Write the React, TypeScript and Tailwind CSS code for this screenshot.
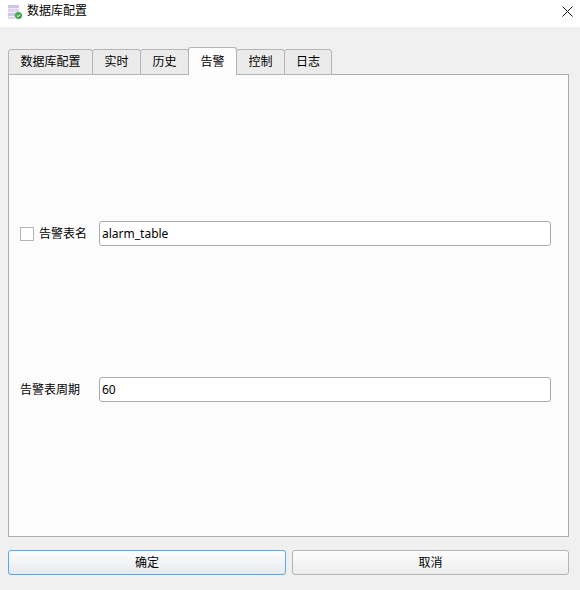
const font = "font-['Noto_Sans','Noto_Sans_CJK_SC',sans-serif]";

const tabs = [
  { label: "数据库配置", width: "w-[85px]" },
  { label: "实时", width: "w-[49px]" },
  { label: "历史", width: "w-[49px]" },
  { label: "告警", width: "w-[49px]", active: true },
  { label: "控制", width: "w-[49px]" },
  { label: "日志", width: "w-[48px]" },
];

function DbIcon() {
  return (
    <svg width="15" height="15" viewBox="0 0 15 15" className="shrink-0 mt-[-3px]">
      <rect x="0" y="0" width="11" height="3.4" fill="#cfc6e6" />
      <rect x="0" y="4" width="11" height="3.4" fill="#dcd5ee" />
      <rect x="0" y="8" width="11" height="3.4" fill="#cfc6e6" />
      <rect x="0" y="12" width="7" height="2" fill="#dcd5ee" />
      <circle cx="10.5" cy="10.5" r="3.6" fill="#43a851" />
      <path d="M8.9 10.5l1.2 1.2 2-2.2" fill="none" stroke="#fff" strokeWidth="1" />
    </svg>
  );
}

function Field({ label, value, check }: { label: string; value: string; check?: boolean }) {
  return (
    <div className="flex items-center h-[25px]">
      <div className="w-[79px] flex items-center shrink-0">
        {check && <span className="w-[14px] h-[14px] border border-[#b4b4b4] bg-white mr-[5px]" />}
        <span className="leading-none">{label}</span>
      </div>
      <div className="flex-1 h-[25px] bg-white border border-[#ababab] rounded-[3px] pl-[2px] flex items-center">
        {value}
      </div>
    </div>
  );
}

export default function App() {
  return (
    <div className={`w-[580px] h-[590px] bg-[#f0f0f0] text-[12px] text-black flex flex-col overflow-hidden ${font}`}>
      <div className="h-[27px] bg-white flex items-center pl-[8px] pr-[7px] shrink-0">
        <DbIcon />
        <span className="ml-[4px] mt-[-5px]">数据库配置</span>
        <svg width="11" height="11" viewBox="0 0 11 11" className="ml-auto mt-[-5px]">
          <path d="M0.5 0.5l10 10M10.5 0.5l-10 10" stroke="#111" strokeWidth="1" fill="none" />
        </svg>
      </div>

      <div className="flex-1 flex flex-col pl-[8px] pr-[11px] pt-[20px]">
        <div className="flex items-end h-[28px] relative z-10 mb-[-1px]">
          {tabs.map((t) => (
            <div
              key={t.label}
              className={
                t.active
                  ? `${t.width} ml-[-1px] h-[28px] bg-[#fdfdfd] border border-b-0 border-[#b4b4b4] rounded-t-[3px] flex items-center justify-center`
                  : `${t.width} ml-[-1px] first:ml-0 h-[26px] bg-[#ebebeb] border border-[#b4b4b4] rounded-t-[3px] flex items-center justify-center`
              }
            >
              {t.label}
            </div>
          ))}
        </div>

        <div className="h-[463px] bg-[#fcfcfc] border border-[#adadad] pl-[11px] pr-[17px] pt-[146px] flex flex-col gap-[131px]">
          <Field label="告警表名" value="alarm_table" check />
          <Field label="告警表周期" value="60" />
        </div>

        <div className="flex gap-[6px] mt-[13px]">
          <button
            type="button"
            className="w-[278px] h-[25px] rounded-[3px] border border-[#52aaf0] bg-gradient-to-b from-[#fdfdfd] to-[#e6eaee] text-[12px]"
          >
            确定
          </button>
          <button
            type="button"
            className="w-[277px] h-[25px] rounded-[3px] border border-[#b4b4b4] bg-gradient-to-b from-[#fdfdfd] to-[#ececec] text-[12px]"
          >
            取消
          </button>
        </div>
      </div>
    </div>
  );
}
